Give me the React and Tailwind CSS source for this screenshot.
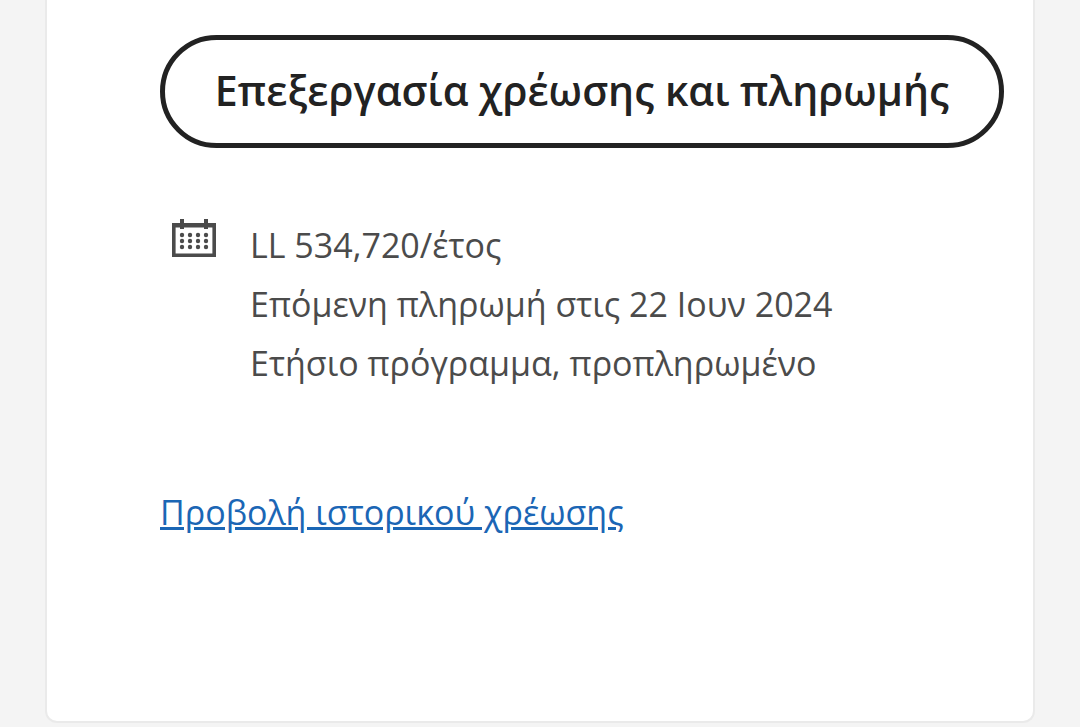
export default function App() {
  const rows = [16, 22, 28];
  const columns = [10, 18, 26, 34];
  return (
    <main lang="el" className="min-h-screen bg-[#f4f4f4] px-[45px] pb-[4px] font-['Open_Sans','Noto_Sans',sans-serif]">
      <section className="min-h-[723px] rounded-b-[12px] border-2 border-t-0 border-[#eaeaea] bg-white pt-[35px] pr-[29px] pl-[113px]">
        <button type="button" className="h-[113px] w-full rounded-full border-[5px] border-[#222222] pb-0.5 text-[41px] font-semibold whitespace-nowrap text-[#222222]">
          Επεξεργασία χρέωσης και πληρωμής
        </button>
        <div className="mt-[68px] flex gap-[34px] pl-[12px]">
          <svg aria-hidden="true" viewBox="0 0 44 40" className="mt-[3px] h-[40px] w-[44px] shrink-0 fill-[#4b4b4b]">
            <path fillRule="evenodd" d="M0 4h44v34H0zM3.6 8.6v25.8h36.8V8.6z" />
            <path d="M8 0h4v10H8zM32 0h4v10h-4z" />
            {rows.map((y) =>
              columns.map((x) => <circle key={`${x}-${y}`} cx={x} cy={y} r="2.2" />)
            )}
          </svg>
          <div className="text-[34px] leading-[59px] whitespace-nowrap text-[#4b4b4b]">
            <p>LL 534,720/έτος</p>
            <p>Επόμενη πληρωμή στις 22 Ιουν 2024</p>
            <p>Ετήσιο πρόγραμμα, προπληρωμένο</p>
          </div>
        </div>
        <a href="#history" className="mt-[90px] inline-block text-[34px] leading-[59px] text-[#1b66b5] underline">
          Προβολή ιστορικού χρέωσης
        </a>
      </section>
    </main>
  );
}
